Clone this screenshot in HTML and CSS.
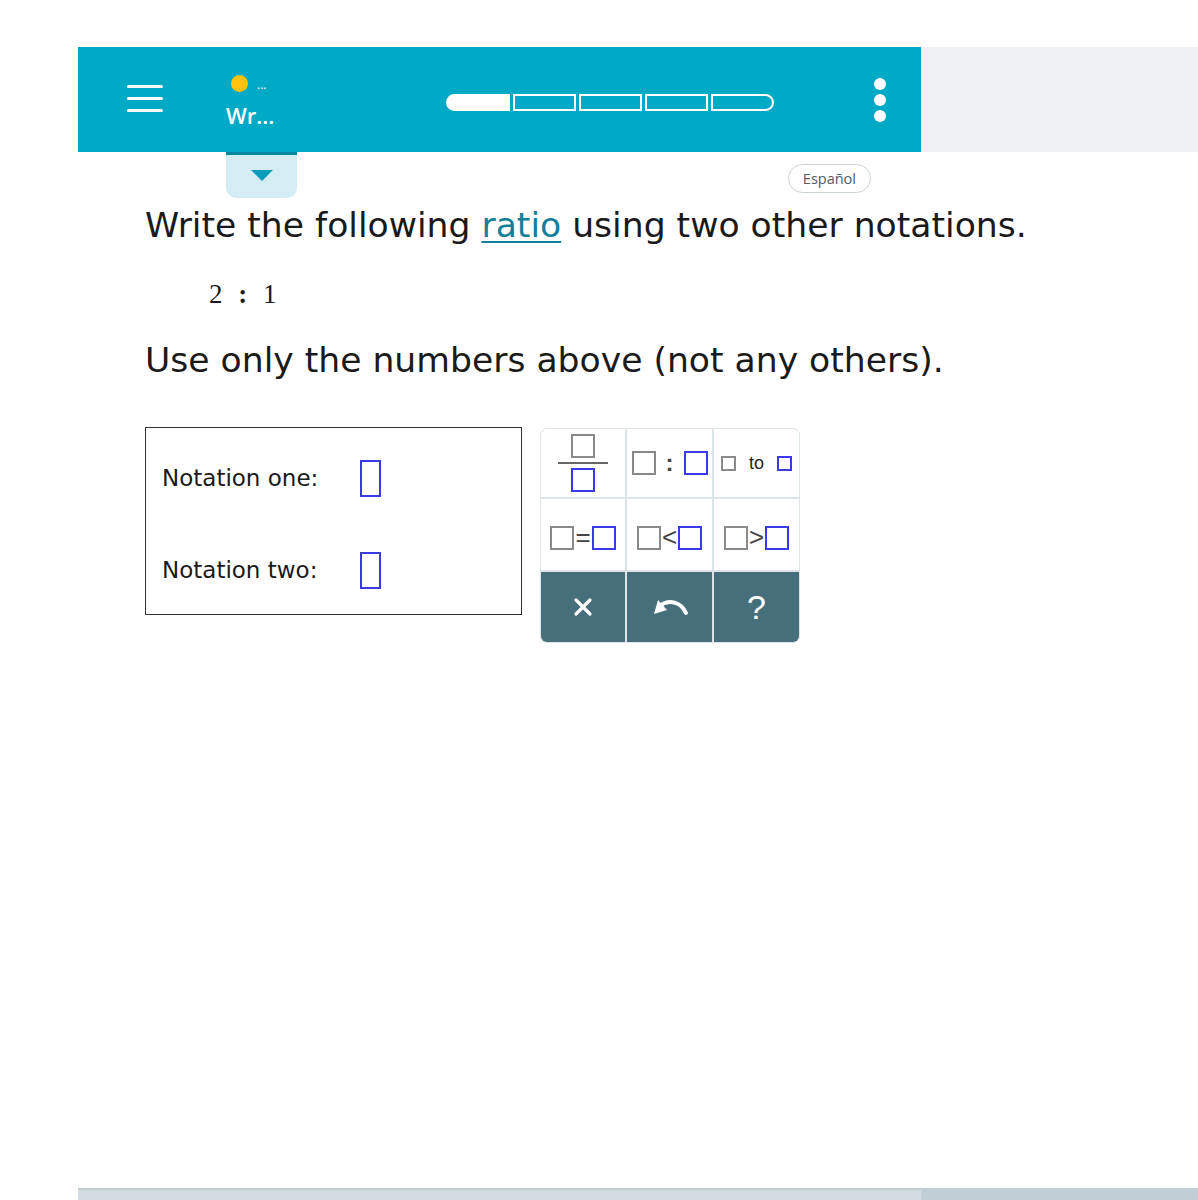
FILE: index.html
```html
<!DOCTYPE html>
<html lang="en">
<head>
  <meta charset="UTF-8" />
  <title>Write the following ratio</title>
  <link rel="stylesheet" href="styles.css">
</head>
<body>
  <div class="topbar">
    <div class="header">
      <div class="menu-btn"><span></span><span></span><span></span></div>
      <div class="topic">
        <div class="topic-status"><span class="dot"></span><span class="ell">...</span></div>
        <div class="topic-name">Wr...</div>
      </div>
      <div class="progress">
        <span class="seg done"></span><span class="seg"></span><span class="seg"></span><span class="seg"></span><span class="seg last"></span>
      </div>
      <div class="kebab"><span></span><span></span><span></span></div>
    </div>
    <div class="header-side"></div>
  </div>

  <div class="subbar">
    <div class="drop-tab"><span class="tri"></span></div>
    <button class="lang-btn">Español</button>
  </div>

  <div class="problem">
    <p class="prompt">Write the following <a href="#" class="term">ratio</a> using two other notations.</p>
    <p class="given">2 <b>:</b> 1</p>
    <p class="prompt">Use only the numbers above (not any others).</p>

    <div class="answer-area">
      <div class="answer-box">
        <div class="answer-row"><span class="answer-label">Notation one:</span><span class="slot"></span></div>
        <div class="answer-row"><span class="answer-label">Notation two:</span><span class="slot"></span></div>
      </div>

      <div class="keypad">
        <div class="key">
          <span class="frac"><span class="sq gray"></span><span class="bar"></span><span class="sq blue"></span></span>
        </div>
        <div class="key"><span class="sq gray"></span><span class="op colon">:</span><span class="sq blue"></span></div>
        <div class="key"><span class="sq gray small"></span><span class="op to">to</span><span class="sq blue small"></span></div>
        <div class="key tight"><span class="sq gray"></span><span class="op">=</span><span class="sq blue"></span></div>
        <div class="key tight"><span class="sq gray"></span><span class="op">&lt;</span><span class="sq blue"></span></div>
        <div class="key tight"><span class="sq gray"></span><span class="op">&gt;</span><span class="sq blue"></span></div>
        <div class="key action">
          <svg width="22" height="22" viewBox="0 0 22 22"><path d="M4 4 L18 18 M18 4 L4 18" stroke="#fff" stroke-width="3.2" stroke-linecap="round"/></svg>
        </div>
        <div class="key action">
          <svg width="40" height="26" viewBox="0 0 40 26"><path d="M36 19 C31 8 19 5 11 11" fill="none" stroke="#fff" stroke-width="4" stroke-linecap="round"/><path d="M4 20 L8 6 L17 16 Z" fill="#fff"/></svg>
        </div>
        <div class="key action"><span class="help">?</span></div>
      </div>
    </div>
  </div>

  <div class="footer">
    <div class="footer-main"></div>
    <div class="footer-side"></div>
  </div>
</body>
</html>
```

FILE: styles.css
```css
body { margin: 0; background: #fff; font-family: "DejaVu Sans", Verdana, sans-serif; color: #1a1a1a; height: 1200px; position: relative; overflow: hidden; }

.topbar { display: flex; margin-top: 47px; margin-left: 78px; height: 105px; }
.header { width: 843px; background: #00a9c6; display: flex; align-items: center; }
.header-side { flex: 1; background: #eef1f2; }

.menu-btn { margin-left: 49px; width: 36px; display: flex; flex-direction: column; gap: 9px; margin-top: -2px; }
.menu-btn span { display: block; height: 3px; background: #fff; border-radius: 2px; }

.topic { margin-left: 63px; width: 100px; color: #fff; font-family: "Open Sans", sans-serif; margin-top: 6px; }
.topic-status { display: flex; align-items: center; height: 18px; }
.dot { width: 17px; height: 17px; border-radius: 50%; background: #ffc20e; margin-left: 5px; margin-top: -2px; }
.ell { font-size: 12px; margin-left: 9px; line-height: 10px; }
.topic-name { font-size: 22px; font-weight: 600; line-height: 30px; margin-top: 6px; }

.progress { margin-left: 120px; display: flex; gap: 3px; height: 17px; margin-top: 6px; }
.seg { width: 63px; border: 2px solid #fff; box-sizing: border-box; }
.seg.done { background: #fff; border-radius: 9px 0 0 9px; width: 64px; }
.seg.last { border-radius: 0 9px 9px 0; }

.kebab { margin-left: 100px; display: flex; flex-direction: column; gap: 4px; }
.kebab span { width: 12px; height: 12px; border-radius: 50%; background: #fff; }

.subbar { display: flex; margin-left: 78px; width: 843px; height: 47px; }
.drop-tab { margin-left: 148px; width: 71px; height: 43px; background: #d3edf3; border-top: 3px solid #0a86a0; border-radius: 0 0 10px 10px; display: flex; justify-content: center; align-items: center; }
.tri { width: 0; height: 0; border-left: 11px solid transparent; border-right: 11px solid transparent; border-top: 11px solid #0a9cbb; margin-top: -2px; }
.lang-btn { margin-left: auto; margin-right: 50px; margin-top: 12px; height: 29px; padding: 0 14px; border: 1px solid #c9d3d6; border-radius: 15px; background: #fff; color: #4d5d63; font-family: "Open Sans", sans-serif; font-size: 14.5px; }

.problem { margin-left: 145px; }
.prompt { margin: 0; font-size: 34.6px; line-height: 40px; }
.prompt:first-child { margin-top: 6px; }
.term { color: #137f98; text-decoration: underline; text-decoration-thickness: 2px; text-underline-offset: 4px; }
.given { margin: 34px 0 31px 64px; font-family: "Liberation Serif", serif; font-size: 27px; line-height: 30px; }
.given b { margin: 0 9px; }

.answer-area { display: flex; align-items: flex-start; margin-top: 47px; }
.answer-box { width: 377px; height: 188px; box-sizing: border-box; border: 1.5px solid #333; padding: 32px 0 0 16px; display: flex; flex-direction: column; gap: 56px; }
.answer-row { display: flex; align-items: center; height: 36px; }
.answer-label { width: 198px; font-size: 23px; }
.slot { width: 17px; height: 33px; border: 2px solid #3a3ae8; }

.keypad { margin-left: 18px; margin-top: 1px; display: grid; grid-template-columns: 84px 85px 85px; grid-template-rows: 68px 71px 70px; gap: 2px; background: #dde4e7; border: 1px solid #dde4e7; border-radius: 7px; overflow: hidden; }
.key { background: #fff; display: flex; align-items: center; justify-content: center; gap: 4px; }
.key.tight { gap: 1px; padding-top: 6px; }
.sq { display: inline-block; width: 24px; height: 24px; border: 2px solid #8a8a8a; box-sizing: border-box; }
.sq.blue { border-color: #3a3ae8; }
.sq.small { width: 15px; height: 15px; }
.op { font-family: "Liberation Sans", sans-serif; font-size: 26px; color: #444; }
.op.colon { font-weight: bold; margin: 0 6px; font-size: 24px; }
.op.to { font-size: 18px; color: #222; margin: 0 9px; }
.frac { display: flex; flex-direction: column; align-items: center; gap: 4px; }
.bar { width: 50px; height: 2px; background: #666; }
.key.action { background: #466e7b; }
.help { color: #fff; font-family: "Liberation Sans", sans-serif; font-size: 34px; }

.footer { position: absolute; left: 78px; right: 0; top: 1188px; height: 12px; display: flex; }
.footer-main { width: 843px; background: #d2dde2; border-top: 2px solid #c3cbcd; }
.footer-side { flex: 1; background: #bfcfd5; }
```
